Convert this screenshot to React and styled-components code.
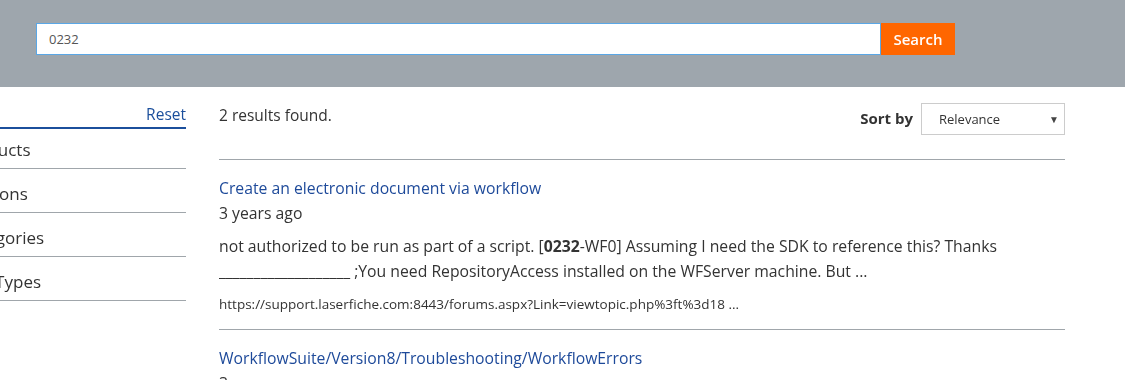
import React from 'react';
import styled, { createGlobalStyle } from 'styled-components';

const GlobalStyle = createGlobalStyle`
  body {
    margin: 0;
    background: #fff;
    font-family: "Open Sans", "Liberation Sans", sans-serif;
    color: #333;
    overflow: hidden;
  }
`;

const filters = ['Products', 'Versions', 'Categories', 'Doc Types'];

const results = [
  {
    title: 'Create an electronic document via workflow',
    age: '3 years ago',
    url: 'https://support.laserfiche.com:8443/forums.aspx?Link=viewtopic.php%3ft%3d18 ...',
  },
  {
    title: 'WorkflowSuite/Version8/Troubleshooting/WorkflowErrors',
    age: '3 years ago',
  },
];

function App() {
  return (
    <>
      <GlobalStyle />
      <Header>
        <SearchInput defaultValue="0232" autoFocus />
        <SearchButton>Search</SearchButton>
      </Header>
      <Body>
        <Sidebar>
          <SidebarHead>
            <ResetLink>Reset</ResetLink>
          </SidebarHead>
          {filters.map((f, i) => (
            <FilterRow key={f} $first={i === 0}>
              {f}
            </FilterRow>
          ))}
        </Sidebar>
        <Main>
          <TopBar>
            <Count>2 results found.</Count>
            <SortBox>
              <SortLabel>Sort by</SortLabel>
              <Select>
                <span>Relevance</span>
                <Arrow>▼</Arrow>
              </Select>
            </SortBox>
          </TopBar>
          {results.map((r, i) => (
            <Result key={i}>
              <Title>{r.title}</Title>
              <Age>{r.age}</Age>
              {i === 0 && (
                <>
                  <Snippet>
                    not authorized to be run as part of a script. [<b>0232</b>-WF0] Assuming I need the SDK to
                    reference this? Thanks ___________________ ;You need RepositoryAccess installed on the
                    WFServer machine. But ...
                  </Snippet>
                  <Url>{r.url}</Url>
                </>
              )}
            </Result>
          ))}
        </Main>
      </Body>
    </>
  );
}

const Header = styled.header`
  height: 87px;
  background: #9ea6ad;
  padding: 23px 0 0 36px;
  box-sizing: border-box;
  display: flex;
  align-items: flex-start;
`;

const SearchInput = styled.input`
  width: 845px;
  height: 32px;
  box-sizing: border-box;
  border: 1px solid #5aa7e6;
  padding: 0 12px;
  font-family: "Open Sans", "Liberation Sans", sans-serif;
  font-size: 13px;
  color: #555;
  outline: none;
  background: #fff;
`;

const SearchButton = styled.button`
  width: 74px;
  height: 32px;
  border: none;
  background: #ff6600;
  color: #fff;
  font-family: "Open Sans", "Liberation Sans", sans-serif;
  font-size: 15px;
  font-weight: 600;
  padding: 0;
`;

const Body = styled.div`
  display: flex;
  gap: 33px;
  margin-left: -40px;
`;

const Sidebar = styled.aside`
  width: 226px;
  flex-shrink: 0;
`;

const SidebarHead = styled.div`
  height: 42px;
  border-bottom: 2px solid #1b4f9c;
  display: flex;
  justify-content: flex-end;
  align-items: flex-end;
  padding-bottom: 3px;
  box-sizing: border-box;
`;

const ResetLink = styled.a`
  color: #1b4f9c;
  font-size: 15.5px;
  line-height: 20px;
`;

const FilterRow = styled.div`
  height: ${p => (p.$first ? 40 : 44)}px;
  padding-top: ${p => (p.$first ? 4 : 8)}px;
  box-sizing: border-box;
  border-bottom: 1px solid #a0a6ab;
  font-size: 17px;
  line-height: 34px;
  color: #333;
  white-space: nowrap;
`;

const Main = styled.main`
  width: 846px;
`;

const TopBar = styled.div`
  display: flex;
  justify-content: space-between;
  align-items: flex-start;
  padding-top: 16px;
  height: 73px;
  box-sizing: border-box;
  border-bottom: 1px solid #a0a6ab;
`;

const Count = styled.div`
  font-size: 15.5px;
  line-height: 24px;
  color: #333;
`;

const SortBox = styled.div`
  display: flex;
  align-items: center;
  gap: 8px;
`;

const SortLabel = styled.span`
  font-weight: 700;
  font-size: 15px;
  color: #333;
  margin-top: -3px;
`;

const Select = styled.div`
  width: 144px;
  height: 32px;
  box-sizing: border-box;
  border: 1px solid #ccc;
  padding: 0 5px 0 17px;
  display: flex;
  align-items: center;
  justify-content: space-between;
  font-size: 13px;
  color: #333;
`;

const Arrow = styled.span`
  font-size: 10px;
  color: #444;
`;

const Result = styled.div`
  padding: 16px 0 15px;
  border-bottom: 1px solid #a0a6ab;
`;

const Title = styled.a`
  display: block;
  color: #1e4a9a;
  font-size: 15.75px;
  line-height: 24px;
`;

const Age = styled.div`
  font-size: 15.75px;
  line-height: 26px;
  color: #333;
`;

const Snippet = styled.p`
  margin: 8px 0 0;
  font-size: 15.75px;
  line-height: 25px;
  color: #333;
  max-width: 800px;

  b {
    font-weight: 700;
  }
`;

const Url = styled.div`
  margin-top: 10px;
  font-size: 13.5px;
  line-height: 20px;
  color: #333;
`;

export default App;
